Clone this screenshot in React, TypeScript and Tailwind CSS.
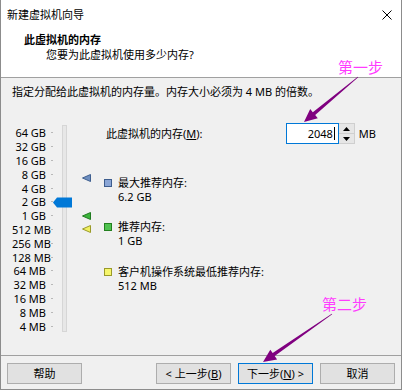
import React from "react";

const font = { fontFamily: '"Noto Sans", "Noto Sans CJK SC", sans-serif' };

const sizes = [
  "64 GB", "32 GB", "16 GB", "8 GB", "4 GB", "2 GB", "1 GB",
  "512 MB", "256 MB", "128 MB", "64 MB", "32 MB", "16 MB", "8 MB", "4 MB",
];

function Btn({ children, primary }: { children: React.ReactNode; primary?: boolean }) {
  return (
    <div
      className={`w-[75px] h-[21px] flex items-center justify-center text-[11px] leading-none bg-[#e1e1e1] border ${
        primary ? "border-[#0078d7]" : "border-[#adadad]"
      }`}
    >
      {children}
    </div>
  );
}

function Tri({ fill, stroke }: { fill: string; stroke: string }) {
  return (
    <svg width="9" height="8" viewBox="0 0 9 8">
      <polygon points="0.5,4 8.5,0.5 8.5,7.5" fill={fill} stroke={stroke} strokeWidth="1" />
    </svg>
  );
}

function Sq({ fill, stroke }: { fill: string; stroke: string }) {
  return <div className="w-[8px] h-[8px] border" style={{ background: fill, borderColor: stroke }} />;
}

export default function App() {
  return (
    <div
      className="relative w-[402px] h-[390px] bg-[#f0f0f0] text-black border-l border-r border-b border-[#8c8c8c] overflow-hidden"
      style={font}
    >
      {/* title + header */}
      <div className="bg-white border-b border-[#a0a0a0]">
        <div className="h-[29px] flex items-center justify-between pl-[6px] pr-[9px]">
          <span className="text-[11px] leading-none">新建虚拟机向导</span>
          <svg width="10" height="10" viewBox="0 0 10 10">
            <path d="M0.5 0.5 L9.5 9.5 M9.5 0.5 L0.5 9.5" stroke="#000" strokeWidth="1" />
          </svg>
        </div>
        <div className="h-[48px] pt-[3px]">
          <div className="pl-[23px] text-[11px] font-bold leading-[16px]">此虚拟机的内存</div>
          <div className="pl-[45px] text-[11px] leading-[14px]">您要为此虚拟机使用多少内存?</div>
        </div>
      </div>

      {/* body */}
      <div className="h-[277px] pl-[11px] pt-[6px]">
        <div className="text-[11px] leading-[16px]">指定分配给此虚拟机的内存量。内存大小必须为 4 MB 的倍数。</div>
        <div className="mt-[23px] flex">
          {/* slider */}
          <div className="relative w-[92px] h-[212px] pt-[3px]">
            <div className="flex flex-col">
              {sizes.map((s) => (
                <div key={s} className="h-[13.8px] flex items-center">
                  <span className="w-[34px] text-right text-[11px] leading-none whitespace-nowrap">{s}</span>
                  <span className="ml-[5px] w-[2px] h-px bg-[#b8b8b8]" />
                </div>
              ))}
            </div>
            <div className="absolute left-[50px] top-[2px] w-[5px] h-[207px] bg-[#e7e7e7] border border-[#d6d6d6]" />
            <svg className="absolute left-[41px] top-[74px]" width="20" height="11" viewBox="0 0 20 11">
              <polygon points="0,5.5 4,0.5 19,0.5 19,10.5 4,10.5" fill="#0078d7" />
            </svg>
            <div className="absolute left-[70px] top-[51px]">
              <Tri fill="#6e8fc0" stroke="#3f5f8f" />
            </div>
            <div className="absolute left-[70px] top-[89px]">
              <Tri fill="#3cb43c" stroke="#1f7a1f" />
            </div>
            <div className="absolute left-[70px] top-[102px]">
              <Tri fill="#f0f060" stroke="#9a9a2a" />
            </div>
          </div>

          {/* right side */}
          <div className="w-[272px] flex flex-col">
            <div className="h-[21px] flex items-center justify-between">
              <span className="ml-[2px] text-[11px] leading-none">
                此虚拟机的内存(<span className="underline">M</span>):
              </span>
              <div className="flex items-center">
                <div className="relative w-[53px] h-[21px] bg-white border border-[#0078d7] flex items-center justify-end pr-[3px] text-[11px] leading-none">
                  2048
                  <span className="ml-px w-px h-[13px] bg-black" />
                </div>
                <div className="w-[16px] h-[21px] flex flex-col bg-[#e6e6e6] border border-[#cfcfcf] border-l-0">
                  <div className="flex-1 flex items-center justify-center border-b border-[#cfcfcf]">
                    <svg width="7" height="4" viewBox="0 0 7 4"><polygon points="0,4 3.5,0 7,4" fill="#000" /></svg>
                  </div>
                  <div className="flex-1 flex items-center justify-center">
                    <svg width="7" height="4" viewBox="0 0 7 4"><polygon points="0,0 3.5,4 7,0" fill="#000" /></svg>
                  </div>
                </div>
                <span className="ml-[4px] text-[11px] leading-none">MB</span>
              </div>
            </div>

            <div className="mt-[32px] flex">
              <div className="mt-[3px]"><Sq fill="#8ba6d6" stroke="#3e5d8e" /></div>
              <div className="ml-[6px] text-[11px] leading-[14px]">
                <div>最大推荐内存:</div>
                <div>6.2 GB</div>
              </div>
            </div>
            <div className="mt-[16px] flex">
              <div className="mt-[3px]"><Sq fill="#4fc24f" stroke="#23801f" /></div>
              <div className="ml-[6px] text-[11px] leading-[14px]">
                <div>推荐内存:</div>
                <div>1 GB</div>
              </div>
            </div>
            <div className="mt-[17px] flex">
              <div className="mt-[3px]"><Sq fill="#f6f66c" stroke="#9a9a2a" /></div>
              <div className="ml-[6px] text-[11px] leading-[14px]">
                <div>客户机操作系统最低推荐内存:</div>
                <div>512 MB</div>
              </div>
            </div>
          </div>
        </div>
      </div>

      {/* footer */}
      <div className="h-[34px] border-t border-[#a0a0a0] pt-[7px] pl-[6px] pr-[6px] flex items-start">
        <Btn>帮助</Btn>
        <div className="ml-auto flex gap-[7px]">
          <Btn>&lt; 上一步(<span className="underline">B</span>)</Btn>
          <Btn primary>下一步(<span className="underline">N</span>) &gt;</Btn>
          <Btn>取消</Btn>
        </div>
      </div>

      {/* annotations */}
      <div className="absolute left-[337px] top-[59px] text-[15px] leading-none text-[#ff3cff]" style={{ fontFamily: '"Noto Sans CJK SC", sans-serif' }}>
        第一步
      </div>
      <div className="absolute left-[321px] top-[296px] text-[15px] leading-none text-[#ff3cff]" style={{ fontFamily: '"Noto Sans CJK SC", sans-serif' }}>
        第二步
      </div>
      <svg className="absolute left-0 top-0 pointer-events-none" width="402" height="390" viewBox="0 0 402 390">
        <polygon
          points="357.2,77.2 314.2,115.1 316.8,118.3 303,122 309.2,109.1 311.8,112.3 356.8,76.8"
          fill="#800080"
        />
        <polygon
          points="331.2,314.2 273.7,356.1 276.1,359.5 262,362 269.3,349.7 271.7,353.1 330.8,313.8"
          fill="#800080"
        />
      </svg>
    </div>
  );
}
